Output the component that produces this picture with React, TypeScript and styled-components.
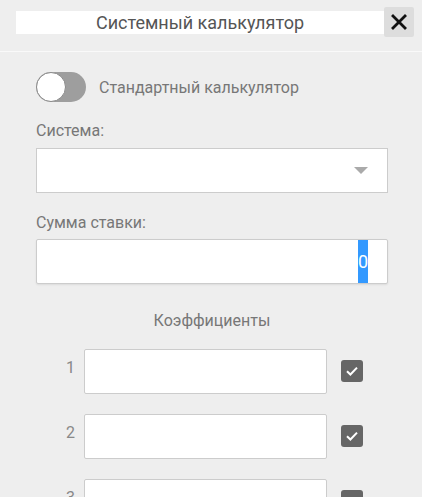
import styled, { createGlobalStyle } from 'styled-components'

const GlobalStyle = createGlobalStyle`
	html,
	body {
		margin: 0;
		padding: 0;
		background: #eeeeee;
		font-family: Roboto, 'Liberation Sans', Arial, sans-serif;
	}
	* {
		box-sizing: border-box;
	}
`

/** SYSTEM CALCULATOR */
const App = () => {
	const coefficients = [1, 2, 3]
	return (
		<>
			<GlobalStyle />
			<Header>
				<Title>Системный калькулятор</Title>
				<CloseButton aria-label='close'>
					<svg width='16' height='16' viewBox='0 0 16 16'>
						<path d='M2 2 L14 14 M14 2 L2 14' stroke='#111' strokeWidth='2.8' strokeLinecap='square' />
					</svg>
				</CloseButton>
			</Header>

			<Body>
				<ToggleRow>
					<Switch>
						<Knob />
					</Switch>
					<ToggleLabel>Стандартный калькулятор</ToggleLabel>
				</ToggleRow>

				<Label>Система:</Label>
				<Select>
					<Arrow />
				</Select>

				<Label $top={20} $bottom={7}>
					Сумма ставки:
				</Label>
				<AmountField>
					<Selected>0</Selected>
				</AmountField>

				<SectionTitle>Коэффициенты</SectionTitle>

				<CoefList>
					{coefficients.map((num) => {
						return (
							<CoefRow key={num}>
								<CoefNumber>{num}</CoefNumber>
								<CoefField />
								<Checkbox>
									<svg width='16' height='16' viewBox='0 0 16 16'>
										<path d='M3 8.3 L6.4 11.5 L13 4.6' fill='none' stroke='#fff' strokeWidth='2' />
									</svg>
								</Checkbox>
							</CoefRow>
						)
					})}
				</CoefList>
			</Body>
		</>
	)
}

export default App

const Header = styled.div`
	display: flex;
	align-items: center;
	height: 52px;
	padding: 0 8px 7px 16px;
	border-bottom: 1px solid #f9f9f9;
`
const Title = styled.div`
	flex: 1;
	height: 23px;
	background: #ffffff;
	color: #555555;
	font-size: 18px;
	line-height: 23px;
	text-align: center;
`
const CloseButton = styled.button`
	display: flex;
	align-items: center;
	justify-content: center;
	width: 30px;
	height: 30px;
	padding: 0;
	border: none;
	border-radius: 2px;
	background: #dddddd;
`
const Body = styled.div`
	display: flex;
	flex-direction: column;
	padding: 20px 34px 0 36px;
`
const ToggleRow = styled.div`
	display: flex;
	align-items: center;
	gap: 13px;
`
const Switch = styled.div`
	display: flex;
	align-items: center;
	width: 50px;
	height: 30px;
	border-radius: 15px;
	background: #9e9e9e;
`
const Knob = styled.div`
	width: 30px;
	height: 30px;
	border-radius: 50%;
	background: #ffffff;
	border: 1px solid #8a8a8a;
`
const ToggleLabel = styled.span`
	color: #777777;
	font-size: 16px;
`
const Label = styled.div<{ $top?: number; $bottom?: number }>`
	margin-top: ${(p) => p.$top ?? 19}px;
	margin-bottom: ${(p) => p.$bottom ?? 8}px;
	color: #777777;
	font-size: 16px;
	line-height: 19px;
`
const Select = styled.div`
	display: flex;
	align-items: center;
	justify-content: flex-end;
	height: 45px;
	padding-right: 19px;
	background: #ffffff;
	border: 1px solid #cccccc;
`
const Arrow = styled.div`
	width: 0;
	height: 0;
	border-left: 7px solid transparent;
	border-right: 7px solid transparent;
	border-top: 7px solid #aaaaaa;
`
const AmountField = styled.div`
	display: flex;
	justify-content: flex-end;
	height: 45px;
	padding-right: 19px;
	background: #ffffff;
	border: 1px solid #cccccc;
	border-radius: 2px;
	box-shadow: 0 1px 2px rgba(0, 0, 0, 0.08);
`
const Selected = styled.span`
	background: #3399ff;
	color: #ffffff;
	font-size: 18px;
	line-height: 43px;
`
const SectionTitle = styled.div`
	margin: 27px 0 19px;
	color: #777777;
	font-size: 16px;
	line-height: 19px;
	text-align: center;
`
const CoefList = styled.div`
	display: flex;
	flex-direction: column;
	gap: 20px;
	padding-left: 30px;
`
const CoefRow = styled.div`
	display: flex;
	align-items: flex-start;
`
const CoefNumber = styled.span`
	width: 18px;
	margin-top: 9px;
	color: #888888;
	font-size: 16px;
	line-height: 19px;
`
const CoefField = styled.div`
	width: 243px;
	height: 45px;
	background: #ffffff;
	border: 1px solid #cccccc;
	border-radius: 2px;
`
const Checkbox = styled.div`
	display: flex;
	align-items: center;
	justify-content: center;
	width: 22px;
	height: 22px;
	margin: 11px 0 0 14px;
	border-radius: 3px;
	background: #666666;
`
